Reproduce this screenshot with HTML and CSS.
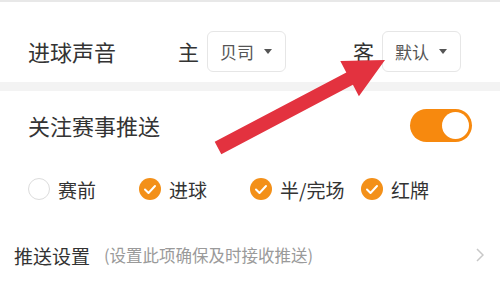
FILE: index.html
```html
<!DOCTYPE html>
<html lang="zh">
<head>
    <meta charset="UTF-8">
    <meta name="viewport" content="width=device-width, initial-scale=1.0">
    <title>推送设置</title>
    <link rel="stylesheet" href="styles.css">
</head>
<body>

    <div class="sound">
        <span class="title">进球声音</span>
        <span class="side home">主</span>
        <div class="select">贝司<span class="caret"></span></div>
        <span class="side away">客</span>
        <div class="select">默认<span class="caret"></span></div>
    </div>

    <div class="band"></div>

    <div class="follow">
        <span class="title">关注赛事推送</span>
        <div class="toggle"><span class="knob"></span></div>
    </div>

    <div class="checks">
        <label class="check"><span class="box"></span>赛前</label>
        <label class="check on"><span class="box"><svg viewBox="0 0 22 22" width="22" height="22"><polyline points="6,11.5 9.5,15 16,8" fill="none" stroke="#fff" stroke-width="2" stroke-linecap="round" stroke-linejoin="round"/></svg></span>进球</label>
        <label class="check on"><span class="box"><svg viewBox="0 0 22 22" width="22" height="22"><polyline points="6,11.5 9.5,15 16,8" fill="none" stroke="#fff" stroke-width="2" stroke-linecap="round" stroke-linejoin="round"/></svg></span>半/完场</label>
        <label class="check on"><span class="box"><svg viewBox="0 0 22 22" width="22" height="22"><polyline points="6,11.5 9.5,15 16,8" fill="none" stroke="#fff" stroke-width="2" stroke-linecap="round" stroke-linejoin="round"/></svg></span>红牌</label>
    </div>

    <div class="push">
        <span class="name">推送设置</span>
        <span class="hint">(设置此项确保及时接收推送)</span>
        <svg class="chevron" viewBox="0 0 8 14" width="8" height="14"><polyline points="1,1 7,7 1,13" fill="none" stroke="#c8c8c8" stroke-width="1.5"/></svg>
    </div>

    <!-- 红色箭头标注 -->
    <svg class="arrow" viewBox="0 0 500 287" width="500" height="287">
        <polygon points="214.7,141.8 346.3,72.4 340.3,60.9 385,60 358.9,96.3 352.9,84.8 221.3,154.2" fill="#e3323f"/>
    </svg>

</body>
</html>
```

FILE: styles.css
```css
body {
    margin: 0;
    width: 500px;
    height: 287px;
    overflow: hidden;
    position: relative;
    background: #fff;
    color: #333;
    font-family: "Noto Sans CJK SC", "Noto Sans", sans-serif;
}
.sound {
    display: flex;
    align-items: center;
    height: 62px;
    padding: 18px 0 0 28px;
    border-top: 2px solid #e8e8e8;
}
.title {
    font-size: 22px;
    width: 88px;
    white-space: nowrap;
}
.side {
    font-size: 21px;
    margin-right: 8px;
}
.home {
    margin-left: 62px;
}
.away {
    margin-left: 67px;
}
.select {
    display: flex;
    align-items: center;
    box-sizing: border-box;
    width: 79px;
    height: 41px;
    padding-left: 12px;
    border: 1px solid #e6e6e6;
    border-radius: 6px;
    font-size: 17px;
    color: #555;
}
.caret {
    margin-left: 10px;
    border-left: 4px solid transparent;
    border-right: 4px solid transparent;
    border-top: 5px solid #555;
}
.band {
    height: 9px;
    background: #f3f3f3;
}
.follow {
    display: flex;
    align-items: center;
    justify-content: space-between;
    height: 68px;
    padding: 0 28px;
}
.follow .title {
    width: auto;
}
.toggle {
    display: flex;
    justify-content: flex-end;
    align-items: center;
    box-sizing: border-box;
    width: 62px;
    height: 33px;
    padding: 3px;
    border-radius: 17px;
    background: #f7890e;
}
.knob {
    width: 27px;
    height: 27px;
    border-radius: 50%;
    background: #fff;
}
.checks {
    display: grid;
    grid-template-columns: repeat(4, 111px);
    align-items: center;
    height: 60px;
    padding-left: 28px;
}
.check {
    display: flex;
    align-items: center;
    gap: 8px;
    font-size: 19px;
    white-space: nowrap;
}
.box {
    display: flex;
    box-sizing: border-box;
    width: 22px;
    height: 22px;
    border-radius: 50%;
    border: 1.5px solid #dcdcdc;
}
.check.on .box {
    border: none;
    background: #f39019;
}
.push {
    display: flex;
    align-items: center;
    height: 72px;
    padding: 0 16px 0 14px;
}
.name {
    font-size: 19px;
}
.hint {
    margin-left: 14px;
    font-size: 16.5px;
    color: #9a9a9a;
}
.chevron {
    margin-left: auto;
}
.arrow {
    position: absolute;
    left: 0;
    top: 0;
    pointer-events: none;
}
```
